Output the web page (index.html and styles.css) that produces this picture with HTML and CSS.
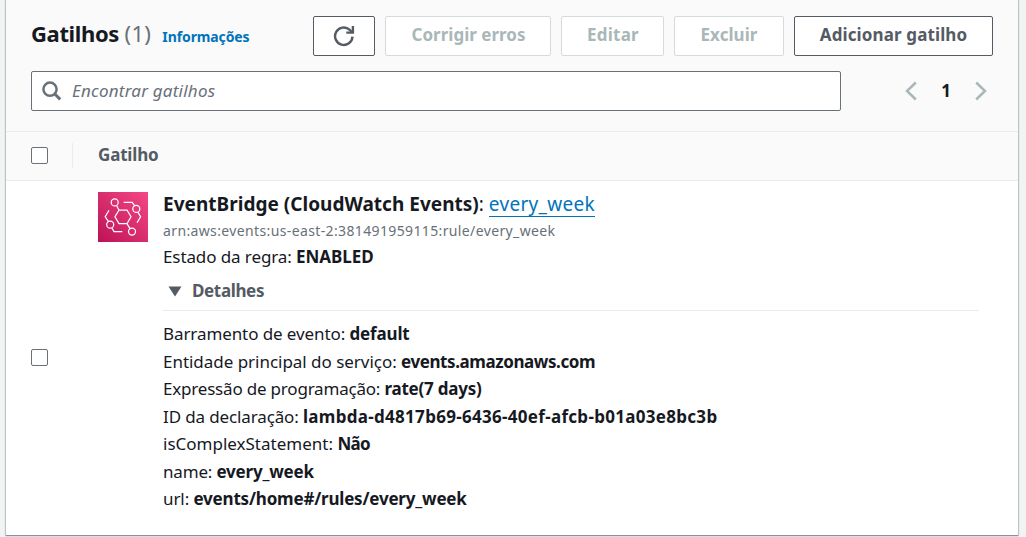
FILE: index.html
```
<!DOCTYPE html>
<html lang="pt-BR">
<head>
<meta charset="utf-8">
<title>Gatilhos</title>
<link rel="stylesheet" href="styles.css">
</head>
<body>
<main class="panel">
  <header class="panel-header">
    <div class="title-row">
      <h2 class="title">Gatilhos <span class="count">(1)</span></h2>
      <a class="info">Informações</a>
      <div class="actions">
        <button class="btn btn-refresh" aria-label="Atualizar">
          <svg width="22" height="22" viewBox="0 0 22 22" fill="none" stroke="currentColor" stroke-width="2.4"><path d="M19.5 11.6a8.7 8.7 0 1 1-2.8-6.8l2 2.2"/><path d="M19.9 1v6.6h-6.6"/></svg>
        </button>
        <button class="btn btn-fix" disabled>Corrigir erros</button>
        <button class="btn btn-edit" disabled>Editar</button>
        <button class="btn btn-delete" disabled>Excluir</button>
        <button class="btn btn-add">Adicionar gatilho</button>
      </div>
    </div>
    <div class="filter-row">
      <div class="search">
        <svg class="search-icon" width="20" height="20" viewBox="0 0 20 20" fill="none" stroke="currentColor" stroke-width="2.5"><circle cx="8" cy="8.2" r="6.6"/><path d="M12.6 12.8l5.6 5.6" stroke-width="3"/></svg>
        <span class="placeholder">Encontrar gatilhos</span>
      </div>
      <nav class="pager">
        <svg width="12" height="20" viewBox="0 0 12 20" fill="none" stroke="currentColor" stroke-width="2.5"><path d="M10.8 1.5L2 10l8.8 8.5"/></svg>
        <span class="page">1</span>
        <svg width="12" height="20" viewBox="0 0 12 20" fill="none" stroke="currentColor" stroke-width="2.5"><path d="M1.2 1.5L10 10l-8.8 8.5"/></svg>
      </nav>
    </div>
  </header>
  <div class="table-head">
    <span class="checkbox"></span>
    <span class="column-name">Gatilho</span>
  </div>
  <div class="table-row">
    <span class="checkbox"></span>
    <svg class="service-icon" width="50" height="50" viewBox="0 0 50 50">
      <defs><linearGradient id="pink" x1="0" y1="1" x2="1" y2="0"><stop offset="0" stop-color="#bc1356"/><stop offset="1" stop-color="#f54785"/></linearGradient></defs>
      <path fill="url(#pink)" d="M0 0h50v50H0z"/>
      <g fill="none" stroke="#fff" stroke-width="1.25">
        <circle cx="16.7" cy="10.4" r="3.5"/><circle cx="38.3" cy="16.9" r="3.5"/><circle cx="12.2" cy="32.7" r="3.5"/><circle cx="34" cy="39.6" r="3.5"/>
        <path d="M21 18h8l4 6.8-4 6.9h-8l-4-6.9zM18.5 13.5L21 18M29 31.7l3 4.9M25.7 10.4h8.6l2.3 3.4M39.8 20.1l2.8 4.7-3.6 6M11 18.3l-3.8 6.5 3.3 4.9M13.8 35.8l2.2 3.8h8.3"/>
      </g>
    </svg>
    <div class="trigger">
      <div class="name"><b>EventBridge (CloudWatch Events)</b>: <a class="link">every_week</a></div>
      <div class="arn">arn:aws:events:us-east-2:381491959115:rule/every_week</div>
      <div class="state">Estado da regra: <b>ENABLED</b></div>
      <div class="details-toggle"><svg width="14" height="11" viewBox="0 0 14 11"><path fill="currentColor" d="M.5.5h13L7 10.5z"/></svg><span>Detalhes</span></div>
      <div class="details">
        <div class="k-event">Barramento de evento: <b>default</b></div>
        <div class="k-service">Entidade principal do serviço: <b>events.amazonaws.com</b></div>
        <div class="k-schedule">Expressão de programação: <b>rate(7 days)</b></div>
        <div class="k-id">ID da declaração: <b>lambda-d4817b69-6436-40ef-afcb-b01a03e8bc3b</b></div>
        <div class="k-complex">isComplexStatement: <b>Não</b></div>
        <div class="k-name">name: <b>every_week</b></div>
        <div class="k-url">url: <b>events/home#/rules/every_week</b></div>
      </div>
    </div>
  </div>
</main>
</body>
</html>
```
FILE: styles.css
```
* { box-sizing: border-box; }
body {
  margin: 0;
  height: 537px;
  overflow: hidden;
  padding: 0 8px 0 6px;
  background: #f2f3f3;
  color: #16191f;
  font: 17px/27.5px "Noto Sans", sans-serif;
}
b { font-weight: 700; }
svg { display: block; flex: none; }

.panel {
  height: 535px;
  background: #fff;
  box-shadow: 0 1px 1px #8b9299, 0 0 1px 1px #c6cdce;
}
.panel-header {
  height: 132px;
  padding: 16px 25px 0;
  background: #fafafa;
  border-bottom: 1px solid #eaeded;
}
.title-row { display: flex; height: 40px; }
.title {
  margin: 0;
  font-size: 22px;
  line-height: 35px;
  font-weight: 700;
  letter-spacing: -.36px;
}
.count { font-weight: 400; color: #687078; letter-spacing: .4px; }
.info {
  margin-left: 11px;
  font-size: 14px;
  line-height: 42px;
  font-weight: 700;
  letter-spacing: -.11px;
  color: #0073bb;
}
.actions { display: flex; gap: 10px; margin-left: auto; }
.btn {
  display: flex;
  align-items: center;
  justify-content: center;
  height: 40px;
  padding: 0 0 2px;
  background: #fff;
  border: 1px solid #545b64;
  border-radius: 2px;
  color: #545b64;
  font: 700 17px/24px "Noto Sans", sans-serif;
  white-space: nowrap;
}
.btn:disabled { color: #aab7b8; border-color: #d5dbdb; }
.btn-refresh { width: 62px; padding: 0; }
.btn-fix { width: 166px; padding-left: 1px; }
.btn-edit { width: 103px; padding-left: 1px; letter-spacing: .24px; }
.btn-delete { width: 110px; letter-spacing: .06px; }
.btn-add { width: 199px; letter-spacing: .12px; }

.filter-row { display: flex; margin-top: 15px; justify-content: space-between; }
.search {
  display: flex;
  align-items: center;
  width: 810px;
  height: 40px;
  padding-left: 10px;
  background: #fff;
  border: 1px solid #687078;
  border-radius: 2px;
  color: #687078;
}
.placeholder {
  margin-left: 10px;
  font-style: italic;
  letter-spacing: .22px;
}
.pager {
  display: flex;
  align-items: center;
  justify-content: space-between;
  width: 82px;
  margin-right: 6px;
  color: #aab7b8;
}
.page { color: #16191f; font-weight: 700; }

.table-head {
  display: flex;
  align-items: center;
  height: 49px;
  padding: 0 25px 1px;
  background: #fafafa;
  border-bottom: 1px solid #eaeded;
}
.checkbox {
  flex: none;
  width: 17px;
  height: 17px;
  background: #fff;
  border: 1px solid #687078;
  border-radius: 2px;
}
.column-name {
  margin-left: 24px;
  padding-left: 25px;
  height: 25px;
  line-height: 23px;
  border-left: 1px solid #eaeded;
  color: #545b64;
  font-weight: 700;
  letter-spacing: -.17px;
}
.table-row {
  display: flex;
  align-items: center;
  height: 352px;
  padding: 0 39px 0 25px;
}
.service-icon { align-self: flex-start; margin: 11px 15px 0 50px; }
.trigger { flex: 1; align-self: flex-start; padding-top: 11px; }
.name { font-size: 19px; line-height: 24px; }
.name b { letter-spacing: .02px; }
.link {
  display: inline-block;
  line-height: 24px;
  border-bottom: 1px solid #0073bb;
  color: #0073bb;
  letter-spacing: .28px;
}
.arn {
  font-size: 14px;
  line-height: 28px;
  height: 27px;
  letter-spacing: .37px;
  color: #687078;
}
.state { line-height: 26px; letter-spacing: -.1px; }
.state b { letter-spacing: -.04px; }
.details-toggle {
  display: flex;
  align-items: center;
  height: 41px;
  padding: 2px 0 0 5px;
  gap: 10px;
  border-bottom: 1px solid #eaeded;
  color: #545b64;
  font-weight: 700;
  letter-spacing: -.36px;
}
.details { padding-top: 9px; }
.k-event { letter-spacing: -.09px; }
.k-event b { letter-spacing: -.16px; }
.k-service { letter-spacing: -.03px; }
.k-service b { letter-spacing: -.42px; }
.k-schedule { letter-spacing: -.2px; }
.k-schedule b { letter-spacing: -.23px; }
.k-id { letter-spacing: -.13px; }
.k-id b { letter-spacing: .3px; }
.k-complex b { letter-spacing: -.7px; }
.k-name { letter-spacing: -.17px; }
.k-name b, .k-url b { letter-spacing: -.2px; }
.k-url { letter-spacing: -.08px; }
```
